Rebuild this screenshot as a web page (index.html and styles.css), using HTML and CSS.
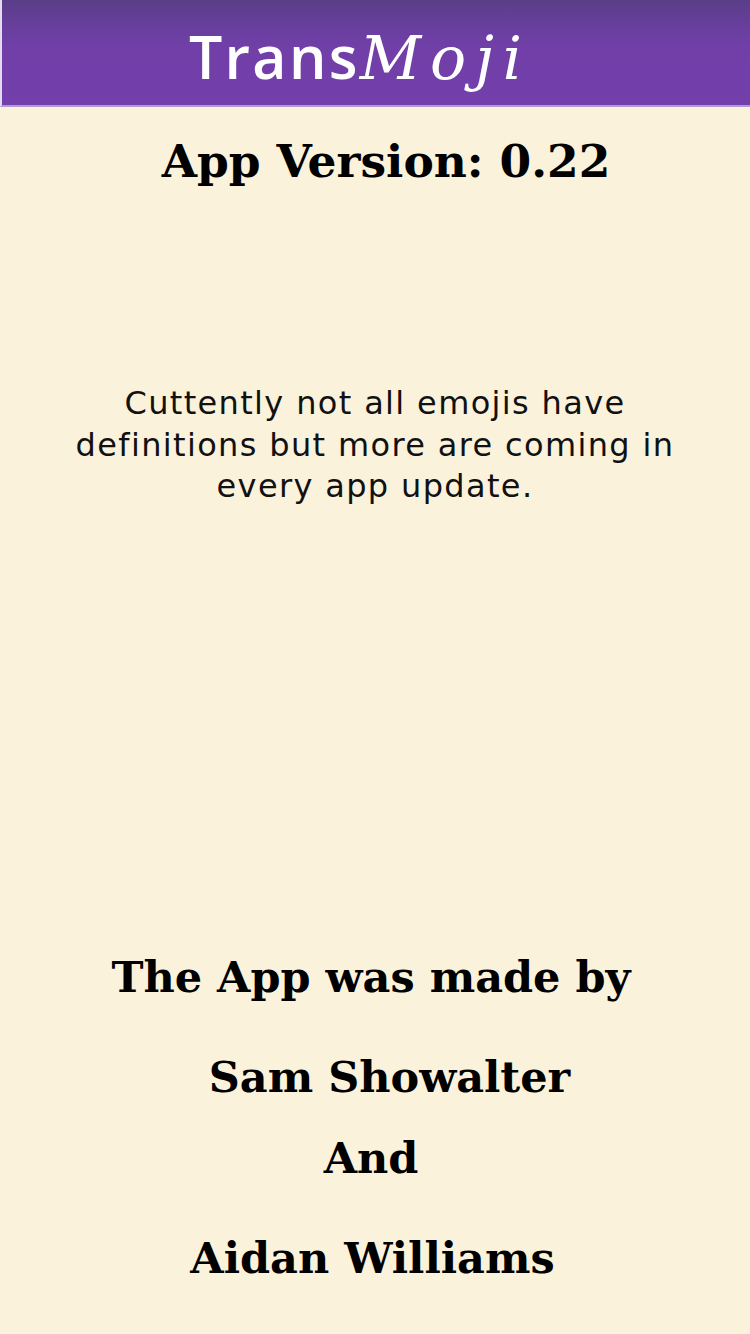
FILE: index.html
```html
<!DOCTYPE html>
<html lang="en">
<head>
<meta charset="utf-8">
<title>TransMoji</title>
<link rel="stylesheet" href="styles.css">
</head>
<body>
<div class="page">
  <header class="topbar">
    <div class="logo"><span class="logo-trans">Trans</span><span class="logo-moji">Moji</span></div>
  </header>
  <main class="content">
    <h1 class="version">App Version: 0.22</h1>
    <p class="note">Cuttently not all emojis have definitions but more are coming in every app update.</p>
    <section class="credits">
      <h2 class="line made-by">The App was made by</h2>
      <h2 class="line name-sam">Sam Showalter</h2>
      <h2 class="line name-and">And</h2>
      <h2 class="line name-aidan">Aidan Williams</h2>
    </section>
  </main>
</div>
</body>
</html>
```

FILE: styles.css
```css
html, body {
  margin: 0;
  padding: 0;
  background: #fbf2dc;
}
.page {
  width: 750px;
  height: 1334px;
  display: flex;
  flex-direction: column;
  background: #fbf2dc;
  overflow: hidden;
}
.topbar {
  height: 105px;
  border-bottom: 2px solid #b09cd4;
  border-left: 2px solid #e4dcee;
  background: linear-gradient(to bottom, #5a3e88 0px, #6a3fa0 30px, #723fa9 50px, #733fab 105px);
  display: flex;
  align-items: center;
  justify-content: center;
  flex-shrink: 0;
}
.logo {
  color: #fff;
  display: flex;
  align-items: baseline;
  padding-right: 32px;
  margin-top: 6px;
}
.logo-trans {
  font-family: "Open Sans", "DejaVu Sans", sans-serif;
  font-weight: 600;
  font-size: 59px;
  letter-spacing: 2.3px;
}
.logo-moji {
  font-family: "DejaVu Serif", serif;
  font-style: italic;
  font-weight: 300;
  font-size: 60px;
  letter-spacing: 9px;
}
.content {
  display: flex;
  flex-direction: column;
  align-items: center;
  flex: 1;
}
.version {
  margin: 28px 0 0 22px;
  font-family: "DejaVu Serif", serif;
  font-weight: bold;
  font-size: 45.5px;
  line-height: 52px;
  color: #000;
}
.note {
  margin: 196px 0 0 0;
  width: 640px;
  text-align: center;
  font-family: "DejaVu Sans", sans-serif;
  font-size: 32px;
  letter-spacing: 1.35px;
  line-height: 41.5px;
  color: #111;
}
.credits {
  margin-top: auto;
  margin-bottom: 50px;
  display: flex;
  flex-direction: column;
  align-items: center;
}
.line {
  margin: 0;
  font-family: "DejaVu Serif", serif;
  font-weight: bold;
  font-size: 43px;
  line-height: 52px;
  color: #000;
}
.made-by { margin: 0 0 0 -8px; }
.name-sam { margin: 48px 0 0 29px; }
.name-and { margin: 29px 0 0 -8px; }
.name-aidan { margin: 48px 0 0 -5px; }
```
